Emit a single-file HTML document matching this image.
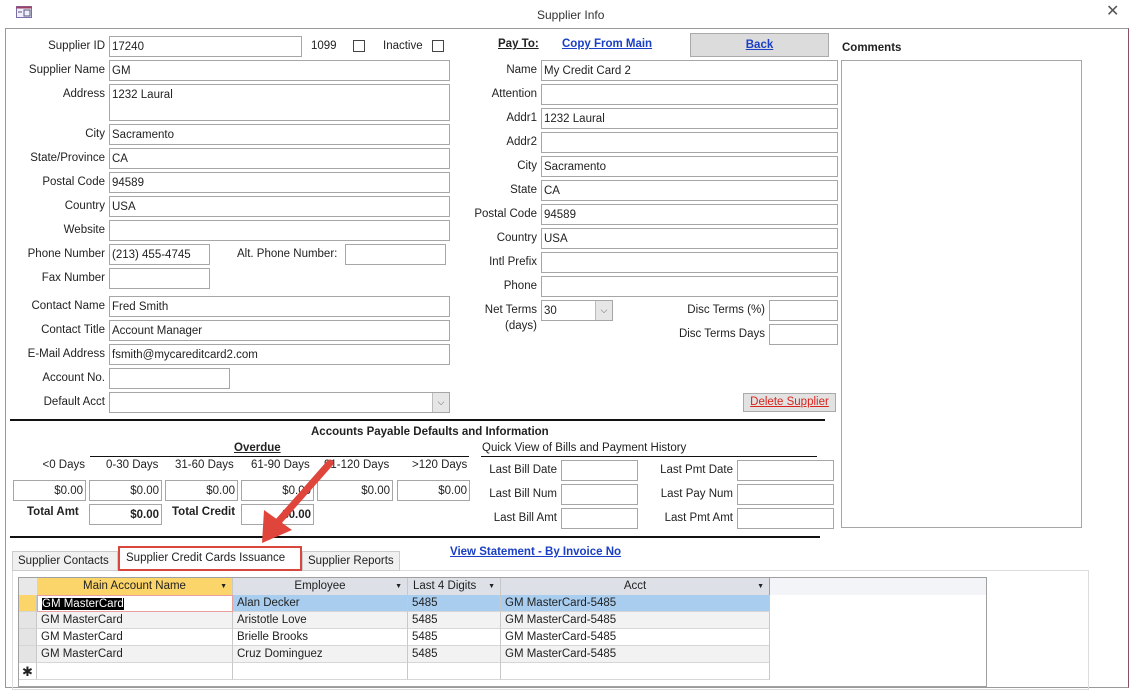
<!DOCTYPE html>
<html><head><meta charset="utf-8"><style>
*{box-sizing:border-box;margin:0;padding:0}
body{width:1136px;height:680px;overflow:hidden;background:#fff;font-family:"Liberation Sans",sans-serif;font-size:11.5px;color:#222;position:relative}
.a{position:absolute;white-space:nowrap;line-height:16px}
.l{position:absolute;text-align:right;white-space:nowrap;line-height:16px}
.i{position:absolute;border:1px solid #a6a6a6;background:#fff;height:21px;padding:3px 2px;line-height:14px;white-space:nowrap}
.r{text-align:right}
.b{font-weight:bold}
.u{text-decoration:underline}
.lnk{color:#1a3fc4;font-weight:bold;text-decoration:underline}
.cb{position:absolute;width:12px;height:12px;border:1px solid #444;background:#fff}
.dd{position:absolute;top:0;right:0;width:17px;height:19px;background:#e6e6e6;border-left:1px solid #bbb;text-align:center;font-size:9px;color:#555;line-height:19px}
.hl{position:absolute;height:2px;background:#111}
.row div{position:absolute;height:17px;line-height:17px;padding-left:4px;border-right:1px solid #c8c8c8;border-bottom:1px solid #d6d6d6}
</style></head><body>
<svg class="a" style="left:16px;top:6px" width="16" height="12"><rect x="0.5" y="0.5" width="15" height="11" fill="#eef" stroke="#7a6fa8"/><rect x="0.5" y="0.5" width="15" height="2" fill="#a04060"/><line x1="2" y1="6" x2="6" y2="6" stroke="#557"/><rect x="8" y="4" width="6" height="6" fill="none" stroke="#557"/></svg>
<div class="a" style="left:537px;top:7px;font-size:12px;color:#333">Supplier Info</div>
<div class="a" style="left:1106px;top:4px;font-size:16px;color:#555">✕</div>
<div class="a" style="left:5px;top:28px;width:1124px;height:660px;border:1px solid #999;border-right-color:#8a5060"></div>

<div class="l" style="right:1031px;top:38px">Supplier ID</div><div class="i" style="left:109px;top:36px;width:193px">17240</div>
<div class="a" style="left:311px;top:38px">1099</div><div class="cb" style="left:353px;top:40px"></div>
<div class="a" style="left:383px;top:38px">Inactive</div><div class="cb" style="left:432px;top:40px"></div>
<div class="l" style="right:1031px;top:62px">Supplier Name</div><div class="i" style="left:109px;top:60px;width:341px">GM</div>
<div class="l" style="right:1031px;top:86px">Address</div><div class="i" style="left:109px;top:84px;width:341px;height:37px">1232 Laural</div>
<div class="l" style="right:1031px;top:126px">City</div><div class="i" style="left:109px;top:124px;width:341px">Sacramento</div>
<div class="l" style="right:1031px;top:150px">State/Province</div><div class="i" style="left:109px;top:148px;width:341px">CA</div>
<div class="l" style="right:1031px;top:174px">Postal Code</div><div class="i" style="left:109px;top:172px;width:341px">94589</div>
<div class="l" style="right:1031px;top:198px">Country</div><div class="i" style="left:109px;top:196px;width:341px">USA</div>
<div class="l" style="right:1031px;top:222px">Website</div><div class="i" style="left:109px;top:220px;width:341px"></div>
<div class="l" style="right:1031px;top:246px">Phone Number</div><div class="i" style="left:109px;top:244px;width:101px">(213) 455-4745</div>
<div class="a" style="left:237px;top:246px">Alt. Phone Number:</div><div class="i" style="left:345px;top:244px;width:101px"></div>
<div class="l" style="right:1031px;top:270px">Fax Number</div><div class="i" style="left:109px;top:268px;width:101px"></div>
<div class="l" style="right:1031px;top:298px">Contact Name</div><div class="i" style="left:109px;top:296px;width:341px">Fred Smith</div>
<div class="l" style="right:1031px;top:322px">Contact Title</div><div class="i" style="left:109px;top:320px;width:341px">Account Manager</div>
<div class="l" style="right:1031px;top:346px">E-Mail Address</div><div class="i" style="left:109px;top:344px;width:341px">fsmith@mycareditcard2.com</div>
<div class="l" style="right:1031px;top:370px">Account No.</div><div class="i" style="left:109px;top:368px;width:121px"></div>
<div class="l" style="right:1031px;top:394px">Default Acct</div><div class="i" style="left:109px;top:392px;width:341px"><div class="dd">⌵</div></div>

<div class="a b u" style="left:498px;top:36px">Pay To:</div>
<div class="a lnk" style="left:562px;top:36px">Copy From Main</div>
<div class="a" style="left:690px;top:33px;width:139px;height:24px;background:#dcdcdc;border:1px solid #aaa;text-align:center;line-height:22px"><span class="lnk">Back</span></div>
<div class="a b" style="left:842px;top:40px">Comments</div>
<div class="a" style="left:841px;top:60px;width:241px;height:468px;border:1px solid #a6a6a6"></div>
<div class="l" style="right:599px;top:62px">Name</div><div class="i" style="left:541px;top:60px;width:297px">My Credit Card 2</div>
<div class="l" style="right:599px;top:86px">Attention</div><div class="i" style="left:541px;top:84px;width:297px"></div>
<div class="l" style="right:599px;top:110px">Addr1</div><div class="i" style="left:541px;top:108px;width:297px">1232 Laural</div>
<div class="l" style="right:599px;top:134px">Addr2</div><div class="i" style="left:541px;top:132px;width:297px"></div>
<div class="l" style="right:599px;top:158px">City</div><div class="i" style="left:541px;top:156px;width:297px">Sacramento</div>
<div class="l" style="right:599px;top:182px">State</div><div class="i" style="left:541px;top:180px;width:297px">CA</div>
<div class="l" style="right:599px;top:206px">Postal Code</div><div class="i" style="left:541px;top:204px;width:297px">94589</div>
<div class="l" style="right:599px;top:230px">Country</div><div class="i" style="left:541px;top:228px;width:297px">USA</div>
<div class="l" style="right:599px;top:254px">Intl Prefix</div><div class="i" style="left:541px;top:252px;width:297px"></div>
<div class="l" style="right:599px;top:278px">Phone</div><div class="i" style="left:541px;top:276px;width:297px"></div>
<div class="l" style="right:599px;top:302px">Net Terms<br>(days)</div><div class="i" style="left:541px;top:300px;width:72px">30<div class="dd">⌵</div></div>
<div class="l" style="right:371px;top:302px">Disc Terms (%)</div><div class="i" style="left:769px;top:300px;width:69px"></div>
<div class="l" style="right:371px;top:326px">Disc Terms Days</div><div class="i" style="left:769px;top:324px;width:69px"></div>
<div class="a" style="left:743px;top:393px;width:93px;height:19px;background:#e2e2e2;border:1px solid #aaa;text-align:center;line-height:17px;color:#d9241c;text-decoration:underline">Delete Supplier</div>

<div class="hl" style="left:10px;top:419px;width:815px"></div>
<div class="a b" style="left:311px;top:424px">Accounts Payable Defaults and Information</div>
<div class="a b u" style="left:234px;top:440px">Overdue</div>
<div class="hl" style="left:90px;top:456px;width:379px;height:1px"></div>
<div class="a" style="left:482px;top:440px">Quick View of Bills and Payment History</div>
<div class="hl" style="left:481px;top:456px;width:336px;height:1px"></div>
<div class="l" style="right:1051px;top:457px">&lt;0 Days</div>
<div class="a" style="left:106px;top:457px">0-30 Days</div>
<div class="a" style="left:175px;top:457px">31-60 Days</div>
<div class="a" style="left:251px;top:457px">61-90 Days</div>
<div class="a" style="left:324px;top:457px">91-120 Days</div>
<div class="a" style="left:412px;top:457px">&gt;120 Days</div>
<div class="i r" style="left:13px;top:480px;width:73px">$0.00</div>
<div class="i r" style="left:89px;top:480px;width:73px">$0.00</div>
<div class="i r" style="left:165px;top:480px;width:73px">$0.00</div>
<div class="i r" style="left:241px;top:480px;width:73px">$0.00</div>
<div class="i r" style="left:317px;top:480px;width:76px">$0.00</div>
<div class="i r" style="left:397px;top:480px;width:73px">$0.00</div>
<div class="a b" style="left:27px;top:504px">Total Amt</div><div class="i r b" style="left:89px;top:504px;width:73px">$0.00</div>
<div class="a b" style="left:172px;top:504px">Total Credit</div><div class="i r b" style="left:241px;top:504px;width:73px">$0.00</div>
<div class="l" style="right:579px;top:462px">Last Bill Date</div><div class="i" style="left:561px;top:460px;width:77px"></div>
<div class="l" style="right:579px;top:486px">Last Bill Num</div><div class="i" style="left:561px;top:484px;width:77px"></div>
<div class="l" style="right:579px;top:510px">Last Bill Amt</div><div class="i" style="left:561px;top:508px;width:77px"></div>
<div class="l" style="right:403px;top:462px">Last Pmt Date</div><div class="i" style="left:737px;top:460px;width:97px"></div>
<div class="l" style="right:403px;top:486px">Last Pay Num</div><div class="i" style="left:737px;top:484px;width:97px"></div>
<div class="l" style="right:403px;top:510px">Last Pmt Amt</div><div class="i" style="left:737px;top:508px;width:97px"></div>
<div class="hl" style="left:10px;top:536px;width:810px"></div>

<div class="a lnk" style="left:450px;top:544px">View Statement - By Invoice No</div>
<div class="a" style="left:12px;top:570px;width:1077px;height:120px;border:1px solid #ddd"></div>
<div class="a" style="left:12px;top:551px;width:106px;height:20px;background:#f0f0f0;border:1px solid #ccc;line-height:19px;padding-left:5px">Supplier Contacts</div>
<div class="a" style="left:302px;top:551px;width:98px;height:20px;background:#f0f0f0;border:1px solid #ccc;line-height:19px;padding-left:5px">Supplier Reports</div>
<div class="a" style="left:118px;top:546px;width:184px;height:25px;background:#fff;border:2px solid #d9463e;line-height:21px;padding-left:6px">Supplier Credit Cards Issuance</div>

<div class="a" style="left:18px;top:577px;width:969px;height:110px;border:1px solid #a0a0a0;background:#fff"></div>
<div class="a" style="left:410px;top:578px;width:576px;height:17px;background:#f3f4f8"></div>
<div class="a" style="left:19px;top:578px;width:18px;height:17px;background:#e8e8e8"></div>
<div class="a" style="left:37px;top:578px;width:196px;height:17px;background:#fbd46a;text-align:center;line-height:17px;border-right:1px solid #c8c8c8">Main Account Name<span style="position:absolute;right:5px;font-size:7px">▼</span></div>
<div class="a" style="left:233px;top:578px;width:175px;height:17px;background:#dde0e6;text-align:center;line-height:17px;border-right:1px solid #c8c8c8">Employee<span style="position:absolute;right:5px;font-size:7px">▼</span></div>
<div class="a" style="left:408px;top:578px;width:93px;height:17px;background:#dde0e6;line-height:17px;padding-left:5px;border-right:1px solid #c8c8c8">Last 4 Digits<span style="position:absolute;right:5px;font-size:7px">▼</span></div>
<div class="a" style="left:501px;top:578px;width:269px;height:17px;background:#dde0e6;text-align:center;line-height:17px;border-right:1px solid #a0a0a0">Acct<span style="position:absolute;right:5px;font-size:7px">▼</span></div>

<div class="row">
<div style="left:19px;top:595px;width:18px;background:#fbd46a"></div>
<div style="left:37px;top:595px;width:196px;background:#fff;border:1px solid #e8a0a0"><span style="background:#000;color:#fff">GM MasterCard</span></div>
<div style="left:233px;top:595px;width:175px;background:#a9cdef">Alan Decker</div>
<div style="left:408px;top:595px;width:93px;background:#a9cdef">5485</div>
<div style="left:501px;top:595px;width:269px;background:#a9cdef">GM MasterCard-5485</div>

<div style="left:19px;top:612px;width:18px;background:#e4e4e4"></div>
<div style="left:37px;top:612px;width:196px;background:#f2f2f2">GM MasterCard</div>
<div style="left:233px;top:612px;width:175px;background:#f2f2f2">Aristotle Love</div>
<div style="left:408px;top:612px;width:93px;background:#f2f2f2">5485</div>
<div style="left:501px;top:612px;width:269px;background:#f2f2f2">GM MasterCard-5485</div>

<div style="left:19px;top:629px;width:18px;background:#e4e4e4"></div>
<div style="left:37px;top:629px;width:196px">GM MasterCard</div>
<div style="left:233px;top:629px;width:175px">Brielle Brooks</div>
<div style="left:408px;top:629px;width:93px">5485</div>
<div style="left:501px;top:629px;width:269px">GM MasterCard-5485</div>

<div style="left:19px;top:646px;width:18px;background:#e4e4e4"></div>
<div style="left:37px;top:646px;width:196px;background:#f2f2f2">GM MasterCard</div>
<div style="left:233px;top:646px;width:175px;background:#f2f2f2">Cruz Dominguez</div>
<div style="left:408px;top:646px;width:93px;background:#f2f2f2">5485</div>
<div style="left:501px;top:646px;width:269px;background:#f2f2f2">GM MasterCard-5485</div>

<div style="left:19px;top:663px;width:18px;background:#fff;padding-left:3px;font-size:13px">✱</div>
<div style="left:37px;top:663px;width:196px"></div>
<div style="left:233px;top:663px;width:175px"></div>
<div style="left:408px;top:663px;width:93px"></div>
<div style="left:501px;top:663px;width:269px"></div>
</div>

<svg class="a" style="left:0;top:0" width="1136" height="680"><line x1="330" y1="463" x2="278" y2="522" stroke="#e0453c" stroke-width="7" stroke-linecap="round"/><polygon points="262,543 264,510 292,530" fill="#e0453c"/></svg>
</body></html>
